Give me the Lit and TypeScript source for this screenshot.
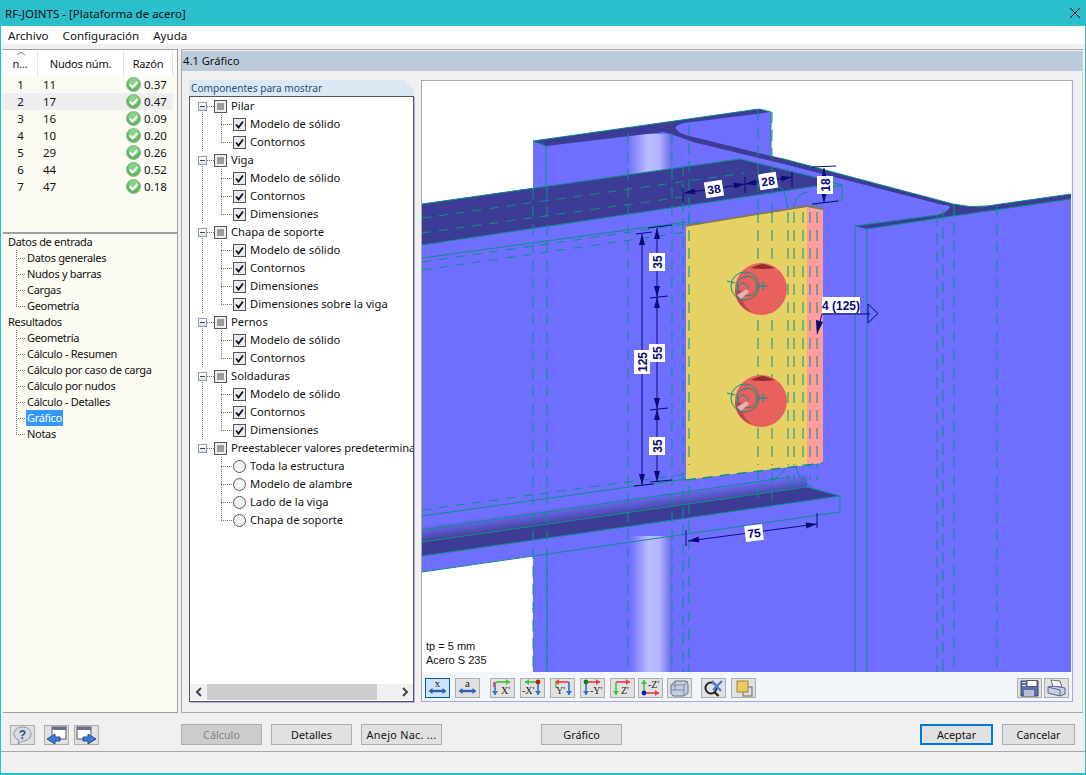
import { LitElement, html, css, svg } from "lit";
import { customElement } from "lit/decorators.js";

const rows = [
  [1, 11, "0.37"],
  [2, 17, "0.47"],
  [3, 16, "0.09"],
  [4, 10, "0.20"],
  [5, 29, "0.26"],
  [6, 44, "0.52"],
  [7, 47, "0.18"],
];

const nav = [
  { label: "Datos de entrada", kids: ["Datos generales", "Nudos y barras", "Cargas", "Geometría"] },
  {
    label: "Resultados",
    kids: ["Geometría", "Cálculo - Resumen", "Cálculo por caso de carga", "Cálculo por nudos", "Cálculo - Detalles", "Gráfico", "Notas"],
  },
];

const solid = "Modelo de sólido";
const groups = [
  { label: "Pilar", kids: [solid, "Contornos"] },
  { label: "Viga", kids: [solid, "Contornos", "Dimensiones"] },
  { label: "Chapa de soporte", kids: [solid, "Contornos", "Dimensiones", "Dimensiones sobre la viga"] },
  { label: "Pernos", kids: [solid, "Contornos"] },
  { label: "Soldaduras", kids: [solid, "Contornos", "Dimensiones"] },
  { label: "Preestablecer valores predeterminados", radio: true, kids: ["Toda la estructura", "Modelo de alambre", "Lado de la viga", "Chapa de soporte"] },
];

const okIcon = html`<svg width="15" height="15" viewBox="0 0 15 15">
  <circle cx="7.5" cy="7.5" r="7" fill="#5cb85c" stroke="#8fb98f" />
  <circle cx="7.5" cy="6" r="5" fill="#86d486" />
  <path d="M3.8 7.6l2.7 2.8 5-5.4" fill="none" stroke="#fff" stroke-width="2.2" />
</svg>`;

const arrowHead = (x: number, y: number, dx: number, dy: number, c: string) =>
  svg`<path d="M${x} ${y}l${-dx * 4 - dy * 3} ${-dy * 4 - dx * 3}v0l${dy * 6} ${dx * 6}z" fill=${c} />`;

const hArrow = (x1: number, x2: number, y: number, c: string) =>
  svg`<path d="M${x1} ${y}H${x2}" stroke=${c} stroke-width="1.6" />${arrowHead(x2, y, x2 > x1 ? 1 : -1, 0, c)}`;

const vArrow = (x: number, y1: number, y2: number, c: string) =>
  svg`<path d="M${x} ${y1}V${y2}" stroke=${c} stroke-width="1.6" />${arrowHead(x, y2, 0, y2 > y1 ? 1 : -1, c)}`;

const letter = (x: number, y: number, t: string) =>
  svg`<text x=${x} y=${y} font-family="Liberation Serif, serif" font-size="10" fill="#222">${t}</text>`;

const icon = (body: unknown) => html`<svg class="glyph" width="23" height="18" viewBox="0 0 23 18">${body}</svg>`;

const dimIcon = (t: string) =>
  icon(svg`<text x="11.5" y="8" text-anchor="middle" font-family="Liberation Serif, serif" font-size="11" fill="#222">${t}</text>
    <path d="M4 12h15" stroke="#2f5fb5" stroke-width="2.4" />
    <path d="M6.5 9l-4 3 4 3zM16.5 9l4 3-4 3z" fill="#2f5fb5" />`);

const axisIcons = [
  icon(svg`${hArrow(5, 19, 3, "#3ec43e")}${vArrow(4, 3, 16, "#2f6fd0")}<path d="M3 3v5" stroke="#e04040" stroke-width="1.5" />${letter(10, 15, "X'")}`),
  icon(svg`${hArrow(18, 4, 3, "#3ec43e")}${vArrow(17, 3, 16, "#2f6fd0")}<circle cx="17" cy="3" r="2.4" fill="#c81818" />${letter(1, 15, "-X'")}`),
  icon(svg`${hArrow(18, 4, 3, "#e84040")}${vArrow(18, 3, 16, "#2f6fd0")}<path d="M5 3v6" stroke="#3ec43e" stroke-width="1.5" />${letter(5, 15, "Y'")}`),
  icon(svg`${hArrow(4, 19, 3, "#e84040")}${vArrow(5, 3, 16, "#2f6fd0")}<circle cx="5" cy="3" r="2.4" fill="#0c7a20" />${letter(9, 15, "-Y'")}`),
  icon(svg`${hArrow(5, 19, 3, "#e84040")}${vArrow(5, 3, 16, "#3ec43e")}${letter(10, 15, "Z'")}`),
  icon(svg`${vArrow(5, 14, 1, "#3ec43e")}${hArrow(5, 20, 14, "#e84040")}<circle cx="5" cy="14" r="2.4" fill="#1a1ab0" />${letter(9, 9, "-Z'")}`),
];

const cubeIcon = icon(svg`<path d="M3 6l4-4h11l2 3v9l-4 3H5l-2-3z" fill="#c5cde0" stroke="#66708a" />
  <path d="M3 6h13v11M16 6l4-4M7 2v9H3M7 11h9" fill="none" stroke="#7d87a3" />`);
const zoomIcon = icon(svg`<circle cx="9" cy="9" r="5.5" fill="none" stroke="#222" stroke-width="2" />
  <path d="M12.5 13l4 4" stroke="#222" stroke-width="2.4" />
  <path d="M10 2l9 10M20 2L11 11" stroke="#4a7fd8" stroke-width="2.4" />`);
const layersIcon = icon(svg`<rect x="11" y="8" width="9" height="9" fill="#ddd" stroke="#666" />
  <rect x="5" y="2" width="11" height="11" fill="#f0c860" stroke="#9a8240" />`);
const saveIcon = icon(svg`<path d="M3 2h17v15H3z" fill="#5b6ea8" stroke="#3a4568" />
  <rect x="9" y="1.5" width="10" height="6" fill="#fff" stroke="#556" />
  <rect x="6" y="11" width="10" height="6" fill="#b8bfd6" />
  <rect x="4" y="3" width="4" height="1" fill="#dde" /><rect x="4" y="6" width="4" height="1" fill="#dde" />`);
const printIcon = icon(svg`<path d="M6 1l9 1 2 6H8z" fill="#fff" stroke="#667" />
  <path d="M3 8l5-1 12 2v6l-5 2-12-3z" fill="#c9cfe6" stroke="#5a6488" />
  <path d="M3 8l12 3v6" fill="none" stroke="#5a6488" />`);
const helpIcon = icon(svg`<path d="M11.5 1c5 0 8.5 3 8.5 7s-3.500 7-8 7l-5 3 1-4c-3-1-5-3-5-6 0-4 3.500-7 8.500-7z" fill="#d8dbe4" stroke="#8b93a8" />
  <text x="11.500" y="13" text-anchor="middle" font-family="Liberation Sans, sans-serif" font-weight="700" font-size="12" fill="#33507f">?</text>`);
const prevIcon = icon(svg`<rect x="7" y="1" width="14" height="12" fill="#fff" stroke="#556" />
  <rect x="7" y="1" width="14" height="3" fill="#66708a" />
  <path d="M10 8v3h5v4h-5v3l-8-5z" fill="#3f78dc" stroke="#244a90" />`);
const nextIcon = icon(svg`<rect x="2" y="1" width="14" height="12" fill="#fff" stroke="#556" />
  <rect x="2" y="1" width="14" height="3" fill="#66708a" />
  <path d="M13 8v3H8v4h5v3l8-5z" fill="#3f78dc" stroke="#244a90" />`);

const NAVY = "#0a0a78";
const TEAL = "#0c8f86";

const dash = (x: number, y1: number, y2: number) =>
  svg`<path d="M${x} ${y1}V${y2}" stroke=${TEAL} stroke-width="1" stroke-dasharray="11 7" />`;

const tick = (x1: number, y1: number, x2: number, y2: number) =>
  svg`<path d="M${x1} ${y1}L${x2} ${y2}" stroke=${NAVY} stroke-width="1" />`;

// dimension line with arrow heads pointing at both ends
const dimLine = (x1: number, y1: number, x2: number, y2: number) => {
  const a = Math.atan2(y2 - y1, x2 - x1);
  const head = (x: number, y: number, d: number) => {
    const c = Math.cos(a) * d;
    const s = Math.sin(a) * d;
    return `M${x} ${y}L${x + c * 11 - s * 3} ${y + s * 11 + c * 3}L${x + c * 11 + s * 3} ${y + s * 11 - c * 3}Z`;
  };
  return svg`<path d="M${x1} ${y1}L${x2} ${y2}" stroke=${NAVY} stroke-width="1" />
    <path d=${head(x1, y1, 1) + head(x2, y2, -1)} fill=${NAVY} />`;
};

const label = (x: number, y: number, t: string, rot: number, w = 18) =>
  svg`<g transform="translate(${x} ${y}) rotate(${rot})">
    <rect x=${-w / 2} y="-8" width=${w} height="16" fill="#fff" />
    <text y="4.500" text-anchor="middle" font-family="Liberation Sans, sans-serif" font-weight="700" font-size="12" fill=${NAVY}>${t}</text>
  </g>`;

const bolt = (cx: number, cy: number) => svg`
  <ellipse cx=${cx} cy=${cy} rx="26" ry="26" fill="#e8615f" />
  <path d="M${cx - 10} ${cy - 21}Q${cx - 2} ${cy - 25} ${cx + 3} ${cy - 25}L${cx + 14} ${cy - 21}Q${cx + 2} ${cy - 19} ${cx - 10} ${cy - 21}Z" fill="#8e2f2f" />
  <path d="M${cx - 26} ${cy}q0 18 18 24q-12 -8 -12 -22z" fill="#b84c4c" />
  <g fill="none" stroke=${TEAL} stroke-width="1">
    <circle cx=${cx - 16} cy=${cy - 3} r="14" />
    <circle cx=${cx - 14} cy=${cy - 3} r="10" />
    <circle cx=${cx - 18} cy=${cy - 1} r="5" />
    <path d="M${cx - 34} ${cy - 8}l8 2M${cx - 5} ${cy - 3}h12M${cx + 2} ${cy - 7}v8" />
  </g>
  <path d="M${cx - 24} ${cy + 6}l10 -6l2 3l-8 7z" fill="#f0b0b0" />`;

const columnLines: [number, number, number][] = [
  [533, 188, 672],
  [547, 188, 672],
  [628, 133, 672],
  [672, 133, 672],
  [683, 165, 672],
  [689, 125, 672],
  [758, 109, 505],
  [772, 112, 505],
  [788, 205, 490],
  [794, 205, 490],
  [803, 205, 480],
  [810, 205, 480],
  [817, 205, 480],
  [937, 215, 672],
  [943, 210, 672],
  [954, 205, 672],
  [997, 206, 672],
];

const beamScene = svg`
  <svg class="scene" viewBox="422 81 649 591" width="649" height="591">
    <defs>
      <linearGradient id="cyl" x1="0" x2="1" y1="0" y2="0">
        <stop offset="0" stop-color="#6e6eff" />
        <stop offset="0.45" stop-color="#bcbcff" />
        <stop offset="0.7" stop-color="#b4b4fc" />
        <stop offset="1" stop-color="#6666ee" />
      </linearGradient>
      <linearGradient id="fillet" gradientUnits="userSpaceOnUse" x1="620" y1="499" x2="622" y2="514">
        <stop offset="0" stop-color="#6e6eff" />
        <stop offset="1" stop-color="#45459f" />
      </linearGradient>
    </defs>
    <rect x="422" y="81" width="649" height="591" fill="#fff" />

    <!-- body of the column and flanges -->
    <path d="M533 141L759 109L771 112L771 156L953 204Q970 208 987 206L1071 194V672H533V556L422 572V204L533 188Z" fill="#6e6eff" />
    <rect x="628" y="134" width="44" height="50" fill="url(#cyl)" />
    <rect x="630" y="536" width="42" height="136" fill="url(#cyl)" />

    <!-- flange tops -->
    <path d="M533 141L759 109L771 112L684 123Q672 126 677 130Q682 134 690 136L780 158L953 204Q970 208 987 206L1071 194V199L953 216L867 229L855 226L937 215Q947 213 950 207Q950 205 943 205L780 163L693 142Q680 137 664 132L546 146Z" fill="#3c3c96" />
    <path d="M677 130Q682 125 700 124L771 112V156L690 136Q680 134 677 130Z" fill="#6e6eff" />

    <!-- upper beam top -->
    <path d="M422 204L740 159L818 178L817 186L422 245Z" fill="#3c3c96" />

    <!-- lower beam -->
    <path d="M422 526L807 472V487L422 542Z" fill="url(#fillet)" />
    <path d="M422 542L807 487L840 496L422 556Z" fill="#3c3c96" />

    <g fill="none" stroke=${TEAL} stroke-width="1">
      <path d="M533 141L759 109L771 112V156M533 141L546 146V190" />
      <path d="M422 204L740 159L818 178M422 245L817 186" />
      <path d="M817 178L842 185V200L812 205M820 189L842 185" />
      <path d="M855 226V672M867 229V672M855 226L937 215Q947 213 950 207M867 229L953 216L1071 199" />
      <path d="M780 158L953 204Q970 208 987 206L1071 194" />
      <path d="M422 542L807 487L840 496V512L422 572M422 556L840 496" />
      <path d="M422 516L686 479M422 530L790 477" />
      <path d="M547 554V672" />
      <path d="M422 258L686 222" />
      <path d="M777 185Q787 190 787 207M794 206Q796 194 807 192" />
      <path d="M770 466Q782 462 786 466M786 466Q780 480 770 479M795 464Q798 480 812 487" />
    </g>
    <g fill="none" stroke=${TEAL} stroke-width="1" stroke-dasharray="9 8">
      <path d="M422 218L745 173M422 233L690 196M422 262L700 222M422 270L686 232M422 510L686 474" />
    </g>
    ${columnLines.map(([x, y1, y2]) => dash(x, y1, y2))}

    <!-- plate -->
    <path d="M686 226L807 207V465L686 480Z" fill="#e6d264" />
    <path d="M807 207L823 210V463L807 465Z" fill="#ff9c9c" />
    <path d="M686 226L807 206L823 209" fill="none" stroke="#8c7a3c" stroke-width="1.500" />
    ${[689, 758, 772, 788, 794, 803, 810, 817].map((x) => dash(x, 212, 465))}
    <path d="M686 480L807 465L823 463" fill="none" stroke=${TEAL} stroke-dasharray="10 7" stroke-width="1.500" />
    ${bolt(761, 289)}
    ${bolt(761, 401)}

    <!-- dimensions -->
    ${tick(683, 188, 683, 203)}${tick(745, 177, 745, 193)}${tick(792, 172, 792, 187)}
    ${dimLine(684, 193, 745, 184)}
    ${dimLine(745, 184, 792, 177)}
    ${label(714, 189, "38", -9)}
    ${label(768, 181, "28", -9)}
    ${tick(812, 167, 836, 166)}${tick(812, 204, 838, 201)}
    ${dimLine(824, 168, 824, 203)}
    ${label(825, 185, "18", -90)}
    ${tick(636, 234, 652, 232)}${tick(648, 228, 672, 225)}${tick(634, 486, 654, 484)}${tick(650, 482, 672, 480)}
    ${tick(650, 298, 668, 296)}${tick(650, 410, 668, 408)}
    ${dimLine(642, 234, 642, 485)}
    ${dimLine(657, 228, 657, 297)}
    ${dimLine(657, 297, 657, 409)}
    ${dimLine(657, 409, 657, 482)}
    ${label(657, 262, "35", -90)}
    ${label(657, 353, "55", -90)}
    ${label(657, 446, "35", -90)}
    ${label(642, 362, "125", -90, 24)}
    <path d="M822 314H870" stroke=${NAVY} />
    <path d="M868 304L878 313.500L868 323Z" fill="none" stroke=${NAVY} />
    <path d="M822 314L817 334" stroke=${NAVY} />
    <path d="M817 334L816 320L823 322Z" fill=${NAVY} />
    ${label(841, 305, "4 (125)", 0, 38)}
    ${tick(686, 530, 686, 546)}${tick(817, 513, 817, 528)}
    ${dimLine(688, 541, 817, 524)}
    ${label(754, 533, "75", -7)}

    <text x="426" y="650" font-family="Liberation Sans, sans-serif" font-size="11" fill="#111">tp = 5 mm</text>
    <text x="426" y="664" font-family="Liberation Sans, sans-serif" font-size="11" fill="#111">Acero S 235</text>
  </svg>
`;

@customElement("app-root")
export class AppRoot extends LitElement {
  static styles = css`
    :host {
      display: block;
      width: 1086px;
      height: 775px;
      font: 11.2px "Noto Sans", sans-serif;
      color: #111;
    }
    .window {
      height: 775px;
      box-sizing: border-box;
      display: flex;
      flex-direction: column;
      background: #f0f0f0;
      border: solid #2bbfcc;
      border-width: 0 1px 2px 1px;
      overflow: hidden;
    }
    .title {
      height: 26px;
      flex: none;
      margin: 0 -1px;
      padding: 0 5px;
      display: flex;
      align-items: center;
      justify-content: space-between;
      background: #2bbfcc;
      font-size: 11.5px;
    }
    .menu {
      height: 18px;
      flex: none;
      display: flex;
      align-items: center;
      gap: 14px;
      padding: 0 7px;
      background: #fff;
      font-size: 11.6px;
    }
    .main {
      height: 669px;
      flex: none;
      display: flex;
      gap: 3px;
      padding: 5px 2px 0 2px;
      box-sizing: border-box;
    }
    .left {
      width: 174px;
      flex: none;
      display: flex;
      flex-direction: column;
      background: #fbfbf3;
      border: solid #a0a0a0;
      border-width: 1px 1px 1px 0;
    }
    .table {
      height: 182px;
      flex: none;
      border-bottom: 2px solid #a0a0a0;
    }
    .thead,
    .trow {
      display: grid;
      grid-template-columns: 35px 86px 49px;
    }
    .thead {
      height: 26px;
      background: #fff;
      width: 170px;
      align-items: center;
      text-align: center;
      font-size: 11px;
      letter-spacing: -0.2px;
      padding-top: 1px;
      box-sizing: border-box;
    }
    .thead span {
      border-right: 1px solid #e3e3e3;
      height: 25px;
      line-height: 25px;
    }
    .sort {
      display: block;
      height: 4px;
      margin-bottom: -4px;
    }
    .trow {
      height: 17px;
      width: 170px;
      align-items: center;
      font-size: 11.5px;
    }
    .trow.alt {
      background: #eeeeee;
    }
    .trow .num {
      text-align: center;
    }
    .trow .node {
      padding-left: 5px;
    }
    .ratio {
      display: flex;
      align-items: center;
      gap: 3px;
      padding-left: 2px;
    }
    .ratio svg {
      flex: none;
    }
    .nav {
      font-size: 11px;
      letter-spacing: -0.3px;
    }
    .nav .root,
    .nav .kid {
      height: 16px;
      line-height: 16px;
    }
    .nav .root {
      padding-left: 5px;
    }
    .nav .kid {
      padding-left: 24px;
      background-image:
        repeating-linear-gradient(to bottom, #777 0 1px, transparent 1px 2px),
        repeating-linear-gradient(to right, #777 0 1px, transparent 1px 2px);
      background-repeat: no-repeat;
      background-size: 1px 100%, 9px 1px;
      background-position: 13px 0, 13px 50%;
      white-space: nowrap;
    }
    .nav .kid:last-child {
      background-size: 1px 50%, 9px 1px;
    }
    .nav .sel {
      display: inline-block;
      padding: 0 1px;
      margin-left: -1px;
      background: #3399ff;
      color: #fff;
    }
    .right {
      flex: 1;
      min-width: 0;
      display: flex;
      flex-direction: column;
      border: 1px solid #a8a8a8;
      border-right-color: #d0d0d0;
    }
    .heading {
      height: 20px;
      flex: none;
      margin-top: 1px;
      padding-left: 1px;
      line-height: 20px;
      background: #bccbd9;
    }
    .body {
      flex: 1;
      min-height: 0;
      display: flex;
      gap: 7px;
      padding: 9px 9px 10px 7px;
    }
    .comp {
      width: 225px;
      flex: none;
      display: flex;
      flex-direction: column;
    }
    .comp-title {
      height: 16px;
      flex: none;
      line-height: 16px;
      padding-left: 2px;
      font-size: 10.1px;
      color: #1f4d80;
      background: #dce7f4;
      clip-path: polygon(0 0, 215px 0, 100% 10px, 100% 100%, 0 100%);
    }
    .tree {
      flex: 1;
      min-height: 0;
      display: flex;
      flex-direction: column;
      border: 1px solid #555;
      box-shadow: 1px 1px 0 #b4b4ee;
      background: #fff;
    }
    .tree-items {
      flex: 1;
      overflow: hidden;
      white-space: nowrap;
    }
    .group {
      background-image: repeating-linear-gradient(to bottom, #777 0 1px, transparent 1px 2px);
      background-repeat: no-repeat;
      background-size: 1px 100%;
      background-position: 12px 9px;
    }
    .group:last-child {
      background-image: none;
    }
    .group:last-child .head {
      letter-spacing: -0.1px;
    }
    .head,
    .leaf {
      height: 18px;
      display: flex;
      align-items: center;
    }
    .head {
      padding-left: 8px;
    }
    .text {
      margin-bottom: 2px;
    }
    .minus {
      width: 9px;
      height: 9px;
      flex: none;
      box-sizing: border-box;
      border: 1px solid #8c9bb0;
      background: linear-gradient(#fff, #dfe4ec);
      display: flex;
      align-items: center;
      justify-content: center;
    }
    .minus::before {
      content: "";
      width: 5px;
      height: 1px;
      background: #444;
    }
    .stub {
      width: 7px;
      height: 1px;
      flex: none;
      background: repeating-linear-gradient(to right, #777 0 1px, transparent 1px 2px);
    }
    .tri {
      width: 13px;
      height: 13px;
      flex: none;
      box-sizing: border-box;
      border: 1px solid #555;
      background: #eef0f5;
      padding: 2px;
      margin-right: 4px;
    }
    .tri::before {
      content: "";
      display: block;
      width: 7px;
      height: 7px;
      background: #9c9c9c;
    }
    .kids {
      margin-left: 31px;
    }
    .leaf {
      padding-left: 12px;
      background-image:
        repeating-linear-gradient(to bottom, #777 0 1px, transparent 1px 2px),
        repeating-linear-gradient(to right, #777 0 1px, transparent 1px 2px);
      background-repeat: no-repeat;
      background-size: 1px 100%, 11px 1px;
      background-position: 0 0, 0 50%;
    }
    .leaf:last-child {
      background-size: 1px 50%, 11px 1px;
    }
    .check {
      width: 13px;
      height: 13px;
      flex: none;
      margin-right: 4px;
      display: block;
    }
    .scrollbar {
      height: 16px;
      flex: none;
      display: flex;
      align-items: center;
      margin-bottom: 1px;
      background: #f0f0f0;
    }
    .sb {
      width: 17px;
      flex: none;
      display: flex;
      justify-content: center;
    }
    .thumb {
      width: 170px;
      height: 16px;
      flex: none;
      background: #cdcdcd;
    }
    .track {
      flex: 1;
    }
    .viewer {
      flex: 1;
      min-width: 0;
      display: flex;
      flex-direction: column;
      border: 1px solid #a8a8a8;
      border-right-color: #a6a6ee;
      border-bottom-color: #a6a6ee;
      background: #f2f5fa;
    }
    .scene {
      display: block;
      flex: none;
    }
    .tools {
      flex: 1;
      display: flex;
      align-items: center;
      padding: 2px 3px 0 3px;
    }
    .tool {
      width: 25px;
      height: 20px;
      flex: none;
      box-sizing: border-box;
      border: 1px solid #adadad;
      background: #e1e1e1;
      display: flex;
      align-items: center;
      justify-content: center;
      padding: 0;
      overflow: visible;
    }
    .glyph {
      overflow: visible;
    }
    .tool.on {
      border-color: #0a5a9e;
      background: #cce4f7;
    }
    .tools .g {
      display: flex;
      gap: 5px;
    }
    .tools .g.tight {
      gap: 3px;
    }
    .tools .g.end {
      gap: 2px;
      margin-left: auto;
    }
    .footer {
      height: 39px;
      flex: none;
      display: flex;
      align-items: center;
      padding: 5px 9px 0 9px;
      box-sizing: border-box;
      border-bottom: 1px solid #a8a8a8;
    }
    .footer .icons {
      display: flex;
    }
    .btn {
      height: 21px;
      width: 81px;
      flex: none;
      box-sizing: border-box;
      border: 1px solid #adadad;
      background: #e1e1e1;
      color: #111;
      font: 10.8px "Noto Sans", sans-serif;
      padding: 0;
    }
    .btn.wide {
      letter-spacing: 0.3px;
    }
    .btn[disabled] {
      background: #cccccc;
      color: #838383;
    }
    .btn.primary {
      border: 2px solid #0078d7;
      width: 73px;
    }
    .btn.cancel {
      width: 73px;
    }
    .status {
      flex: 1;
    }
  `;

  private renderTable() {
    return html`<div class="table">
      <div class="thead">
        <span>
          <svg class="sort" width="35" height="4" viewBox="0 0 35 4"><path d="M14 4l4-3 4 3" fill="none" stroke="#777" /></svg>
          n…</span
        >
        <span>Nudos núm.</span>
        <span>Razón</span>
      </div>
      ${rows.map(
        (r, i) => html`<div class="trow ${i === 1 ? "alt" : ""}">
          <span class="num">${r[0]}</span>
          <span class="node">${r[1]}</span>
          <span class="ratio">${okIcon}${r[2]}</span>
        </div>`
      )}
    </div>`;
  }

  private renderNav() {
    return html`<div class="nav">
      ${nav.map(
        (g) => html`<div class="root">${g.label}</div>
          <div>
            ${g.kids.map(
              (k) => html`<div class="kid">${k === "Gráfico" ? html`<span class="sel">${k}</span>` : k}</div>`
            )}
          </div>`
      )}
    </div>`;
  }

  private renderMark(radio?: boolean) {
    if (radio) {
      return html`<svg class="check" viewBox="0 0 13 13">
        <circle cx="6.5" cy="6.5" r="6" fill="#f4f4f4" stroke="#555" />
      </svg>`;
    }
    return html`<svg class="check" viewBox="0 0 13 13">
      <rect x="0.5" y="0.5" width="12" height="12" fill="#e8ebf2" stroke="#555" />
      <path d="M3 6.500l2.500 3 4.500-6" fill="none" stroke="#111" stroke-width="1.800" />
    </svg>`;
  }

  private renderComponents() {
    return html`<div class="comp">
      <div class="comp-title">Componentes para mostrar</div>
      <div class="tree">
        <div class="tree-items">
          ${groups.map(
            (g) => html`<div class="group">
              <div class="head">
                <span class="minus"></span><span class="stub"></span><span class="tri"></span><span class="text">${g.label}</span>
              </div>
              <div class="kids">
                ${g.kids.map((k) => html`<div class="leaf">${this.renderMark(g.radio)}<span class="text">${k}</span></div>`)}
              </div>
            </div>`
          )}
        </div>
        <div class="scrollbar">
          <span class="sb"
            ><svg width="8" height="10" viewBox="0 0 8 10"><path d="M6 1L2 5l4 4" fill="none" stroke="#444" stroke-width="2" /></svg
          ></span>
          <span class="thumb"></span>
          <span class="track"></span>
          <span class="sb"
            ><svg width="8" height="10" viewBox="0 0 8 10"><path d="M2 1l4 4-4 4" fill="none" stroke="#444" stroke-width="2" /></svg
          ></span>
        </div>
      </div>
    </div>`;
  }

  private renderViewer() {
    return html`<div class="viewer">
      ${beamScene}
      <div class="tools">
        <div class="g">
          <button class="tool on">${dimIcon("x")}</button>
          <button class="tool">${dimIcon("a")}</button>
        </div>
        <div class="g" style="margin-left:10px">
          ${axisIcons.slice(0, 5).map((i) => html`<button class="tool">${i}</button>`)}
        </div>
        <div class="g tight" style="margin-left:3px">
          <button class="tool">${axisIcons[5]}</button>
          <button class="tool" style="margin-left:1px">${cubeIcon}</button>
        </div>
        <div class="g" style="margin-left:9px">
          <button class="tool">${zoomIcon}</button>
          <button class="tool">${layersIcon}</button>
        </div>
        <div class="g end">
          <button class="tool">${saveIcon}</button>
          <button class="tool">${printIcon}</button>
        </div>
      </div>
    </div>`;
  }

  render() {
    return html`<div class="window">
      <div class="title">
        <span>RF-JOINTS - [Plataforma de acero]</span>
        <svg width="12" height="12" viewBox="0 0 12 12"><path d="M1 1l10 10M11 1L1 11" stroke="#111" /></svg>
      </div>
      <div class="menu"><span>Archivo</span><span>Configuración</span><span>Ayuda</span></div>
      <div class="main">
        <div class="left">${this.renderTable()}${this.renderNav()}</div>
        <div class="right">
          <div class="heading">4.1 Gráfico</div>
          <div class="body">${this.renderComponents()}${this.renderViewer()}</div>
        </div>
      </div>
      <div class="footer">
        <div class="icons">
          <button class="tool">${helpIcon}</button>
          <button class="tool" style="margin-left:9px">${prevIcon}</button>
          <button class="tool" style="margin-left:5px">${nextIcon}</button>
        </div>
        <button class="btn" disabled style="margin-left:82px">Cálculo</button>
        <button class="btn" style="margin-left:9px">Detalles</button>
        <button class="btn wide" style="margin-left:9px">Anejo Nac. ...</button>
        <button class="btn" style="margin-left:99px">Gráfico</button>
        <button class="btn primary" style="margin-left:298px">Aceptar</button>
        <button class="btn cancel" style="margin-left:9px">Cancelar</button>
      </div>
      <div class="status"></div>
    </div>`;
  }
}
